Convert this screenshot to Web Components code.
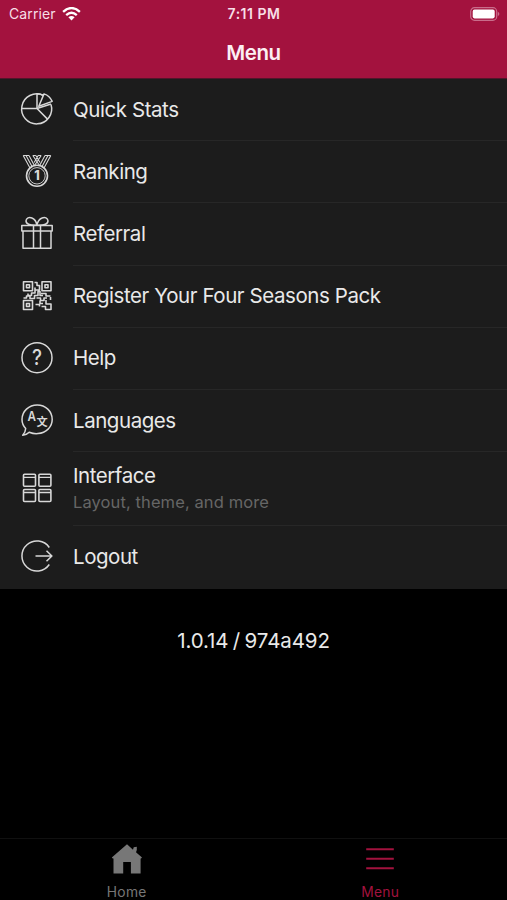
<!DOCTYPE html>
<html lang="en">
<head>
<meta charset="utf-8">
<meta name="viewport" content="width=device-width, initial-scale=1">
<title>Menu</title>
<style>
  html, body { margin: 0; height: 100%; background: #000; overflow: hidden; }
  body { font-family: Inter, "Liberation Sans", sans-serif; color: #e9e9e9; }
</style>
</head>
<body>
<app-screen>
  <status-bar slot="top" carrier="Carrier" time="7:11 PM"></status-bar>
  <nav-header slot="top">Menu</nav-header>
  <menu-item icon="stats">Quick Stats</menu-item>
  <menu-item icon="medal">Ranking</menu-item>
  <menu-item icon="gift">Referral</menu-item>
  <menu-item icon="qr">Register Your Four Seasons Pack</menu-item>
  <menu-item icon="help">Help</menu-item>
  <menu-item icon="languages">Languages</menu-item>
  <menu-item icon="grid">Interface<span slot="detail">Layout, theme, and more</span></menu-item>
  <menu-item icon="logout">Logout</menu-item>
  <span slot="version">1.0.14 / 974a492</span>
  <tab-item slot="tabs" icon="home">Home</tab-item>
  <tab-item slot="tabs" icon="menu" active>Menu</tab-item>
</app-screen>

<script>
// all icons share a 32x32 box
const ICONS = {
  stats: `
    <path d="M22 2.300A15 15 0 1 0 30 11.500"/>
    <path d="M1 15.500H16V.8Q19.500 .6 22 2.300M16 15.500L26.500 26.100M16 15.500L30 11"/>
    <path d="M17.800 13.200L23 .9Q28.800 2.800 31.200 8.400Z"/>`,
  medal: `
    <g stroke-width="1.1">
      <path d="M2.200 .5L9 13M5 .5L11 11.600M8 .5L13.500 10.700M2.200 .5H8"/>
      <path d="M29.800 .5L23 13M27 .5L21 11.600M24 .5L18.500 10.700M24 .5H29.800"/>
      <path d="M11.800 .5L18.500 10.500M14.800 .5L19 7.500M20.200 .5L13.500 10.500M17.200 .5L13.200 7.500M11.800 .5H14.800M17.200 .5H20.200"/>
      <circle cx="16" cy="20.800" r="10.500" stroke-width="1.600" fill="#1c1c1c"/>
      <circle cx="16" cy="20.800" r="8.200" stroke-width=".9"/>
    </g>
    <text x="16" y="25.300" font-size="12.500" font-weight="800">1</text>`,
  gift: `
    <path d="M.8 8.400H31.200V14H.8ZM2 14V31.200H30V14M12.500 8.400V31.200M19.500 8.400V31.200"/>
    <path d="M15.800 8.200C8.500 8.500 4.800 6.800 5 3.800C5.200 .8 8.200 -.2 11 1C13.500 2 15.400 5 15.800 8.200C16.600 5 18.500 2 21 1C23.800 -.2 26.800 .8 27 3.800C27.200 6.800 23.500 8.500 16.200 8.200"/>`,
  qr: `
    <g stroke-width="1.600">
      <path d="M2.500 1.800H11.500V10.800H2.500ZM21 1.800H30V10.800H21ZM2.500 20.500H11.500V29.500H2.500Z"/>
      <path d="M5.500 4.800H8.500V7.800H5.500ZM24 4.800H27V7.800H24ZM5.500 23.500H8.500V26.500H5.500Z"/>
      <path d="M13.500 2.500H16V5.500H18.500V10H14V7.500M14 10V13H10.500V15.500H7V13.500M2.500 18H5.500V16H9V18.500H13.500V15.500H17V11.500H19V15.500H22M20 13.500H25V16H29.500M26 18H23V20.500H19.500V18H15.500M19 20.500V23.500H22M29.500 17V20M25 20V24H30V29.500H24.500V26.500H20.500M14.500 24.500H18.500V26.500"/>
    </g>`,
  help: `
    <circle cx="16" cy="15.700" r="15"/>
    <text x="16" y="23.200" font-size="21.500" font-weight="500" textLength="10" lengthAdjust="spacingAndGlyphs">?</text>`,
  languages: `
    <path d="M8.200 28.200C11 29.300 14 30 17 29.600C25 29 31.200 23 31.200 15.500C31.200 7.200 24.500 1 16.200 1C7.900 1 1 7.200 1 15.500C1 19 2.300 22 4.700 24.500C4.600 27 3.700 29 1.700 31.200C4.400 30.900 6.700 29.800 8.200 28.200Z"/>
    <text x="10.700" y="17.200" font-size="13" font-weight="600" textLength="8.500" lengthAdjust="spacingAndGlyphs">A</text>
    <text x="21.200" y="22.300" font-size="11.200" font-weight="700" font-family="Noto Sans CJK SC, sans-serif">文</text>`,
  grid: `
    <g stroke-width="1.600">
      <rect x="2.500" y="2.300" width="12" height="12" rx="1"/><rect x="17.900" y="2.300" width="12" height="12" rx="1"/>
      <rect x="2.500" y="17.500" width="12" height="12" rx="1"/><rect x="17.900" y="17.500" width="12" height="12" rx="1"/>
      <path d="M2.500 5.300H14.500M17.900 5.300H29.900M2.500 20.500H14.500M17.900 20.500H29.900" stroke-width="1.300"/>
    </g>`,
  logout: `
    <path d="M28.300 7.500A15 15 0 1 0 28.300 24.500M14.500 16H30.800M25.500 10.700L30.900 16L25.500 21.300"/>`,
  home: `
    <path fill="currentColor" stroke="none" d="M16 .3L22 5.800L22.700 3.200L25.800 2.800V6L25 8.300L31 13.400L30 14.400H29.600V29.500H19.900V18H12.200V29.500H2.500V14.400H1.800L.8 13.400Z"/>`,
  menu: `<path stroke-width="2.100" d="M2.200 5.200H29.800M2.200 14.800H29.800M2.200 24.200H29.800"/>`
};

class AppIcon extends HTMLElement {
  constructor() {
    super();
    this.attachShadow({ mode: 'open' });
  }

  connectedCallback() {
    this.shadowRoot.innerHTML = `
      <style>
        :host { display: block; width: 32px; height: 32px; flex: none; }
        svg { display: block; width: 100%; height: 100%; overflow: visible; fill: none; stroke: currentColor; stroke-width: 1.5; stroke-linejoin: round; }
        text { fill: currentColor; stroke: none; text-anchor: middle; }
      </style>
      <svg viewBox="0 0 32 32">${ICONS[this.getAttribute('name')]}</svg>
    `;
  }
}

class StatusBar extends HTMLElement {
  constructor() {
    super();
    this.attachShadow({ mode: 'open' });
  }

  connectedCallback() {
    this.shadowRoot.innerHTML = `
      <style>
        :host { display: grid; grid-template-columns: 1fr auto 1fr; align-items: center; height: 27px; padding: 0 7px 0 9px; color: #f7dfe7; font-size: 14px; }
        .left { display: flex; align-items: center; gap: 6px; letter-spacing: .1px; }
        .time { font-size: 14px; font-weight: 600; letter-spacing: .5px; padding-right: 1px; }
        .battery { justify-self: end; }
        svg { display: block; }
      </style>
      <div class="left">
        <span>${this.getAttribute('carrier')}</span>
        <svg width="19" height="14" viewBox="0 0 19 14" fill="none" stroke="#fff" stroke-width="2.4">
          <path d="M1.100 4.800Q9.500 -2.600 17.900 4.800M4.200 8.100Q9.500 3.500 14.800 8.100"/>
          <path d="M6.400 10.200Q9.500 7.900 12.600 10.200L9.500 13.400Z" fill="#fff" stroke="none"/>
        </svg>
      </div>
      <div class="time">${this.getAttribute('time')}</div>
      <svg class="battery" width="30" height="14" viewBox="0 0 30 14">
        <rect x=".7" y=".7" width="26" height="12.600" rx="3.800" fill="none" stroke="#c96d8b" stroke-width="1.200"/>
        <rect x="2.700" y="2.600" width="22" height="8.800" rx="1.800" fill="#fff"/>
        <path d="M27.800 4.800Q31 7 27.800 9.200Z" fill="#c96d8b"/>
      </svg>
    `;
  }
}

class NavHeader extends HTMLElement {
  constructor() {
    super();
    this.attachShadow({ mode: 'open' });
    this.shadowRoot.innerHTML = `
      <style>
        :host { display: flex; align-items: center; justify-content: center; height: 50px; color: #fceff3; font-size: 20.5px; font-weight: 600; letter-spacing: -.4px; }
      </style>
      <slot></slot>
    `;
  }
}

class MenuItem extends HTMLElement {
  constructor() {
    super();
    this.attachShadow({ mode: 'open' });
  }

  connectedCallback() {
    const hasDetail = this.querySelector('[slot=detail]');
    this.shadowRoot.innerHTML = `
      <style>
        :host { display: flex; height: ${hasDetail ? '74px' : '62.2px'}; padding-left: 21px; gap: 20px; }
        app-icon { align-self: center; color: #d8d8d8; position: relative; top: -1px; }
        .content { flex: 1; display: flex; flex-direction: column; justify-content: center; gap: 3px; box-sizing: border-box; border-bottom: 1px solid #272727; }
        :host(:last-of-type) .content { border-bottom: 0; }
        .label { font-size: 20.5px; line-height: 24px; letter-spacing: -.45px; word-spacing: .2px; }
        .detail { font-size: 16.5px; line-height: 22px; letter-spacing: .1px; color: #666; }
      </style>
      <app-icon name="${this.getAttribute('icon')}"></app-icon>
      <div class="content">
        <div class="label"><slot></slot></div>
        ${hasDetail ? '<div class="detail"><slot name="detail"></slot></div>' : ''}
      </div>
    `;
  }
}

class TabItem extends HTMLElement {
  constructor() {
    super();
    this.attachShadow({ mode: 'open' });
  }

  connectedCallback() {
    this.shadowRoot.innerHTML = `
      <style>
        :host { flex: 1; display: flex; flex-direction: column; align-items: center; gap: 8px; padding-top: 5px; color: #777; font-size: 13.8px; line-height: 17px; letter-spacing: .3px; }
        :host([active]) { color: #a3123e; }
      </style>
      <app-icon name="${this.getAttribute('icon')}"></app-icon>
      <span><slot></slot></span>
    `;
  }
}

class AppScreen extends HTMLElement {
  constructor() {
    super();
    this.attachShadow({ mode: 'open' });
    this.shadowRoot.innerHTML = `
      <style>
        :host { display: flex; flex-direction: column; height: 900px; overflow: hidden; background: #000; }
        header { height: 79px; background: #a3123e; border-bottom: 1px solid #51152a; box-sizing: border-box; flex: none; }
        main { flex: 1; }
        .list { background: #1c1c1c; height: 509.5px; }
        .version { padding-top: 39px; text-align: center; font-size: 20.5px; line-height: 26px; letter-spacing: -.1px; word-spacing: -1.2px; }
        footer { display: flex; height: 62px; flex: none; border-top: 1px solid #101010; box-sizing: border-box; }
      </style>
      <header><slot name="top"></slot></header>
      <main>
        <div class="list"><slot></slot></div>
        <div class="version"><slot name="version"></slot></div>
      </main>
      <footer><slot name="tabs"></slot></footer>
    `;
  }
}

customElements.define('app-icon', AppIcon);
customElements.define('status-bar', StatusBar);
customElements.define('nav-header', NavHeader);
customElements.define('menu-item', MenuItem);
customElements.define('tab-item', TabItem);
customElements.define('app-screen', AppScreen);
</script>
</body>
</html>
